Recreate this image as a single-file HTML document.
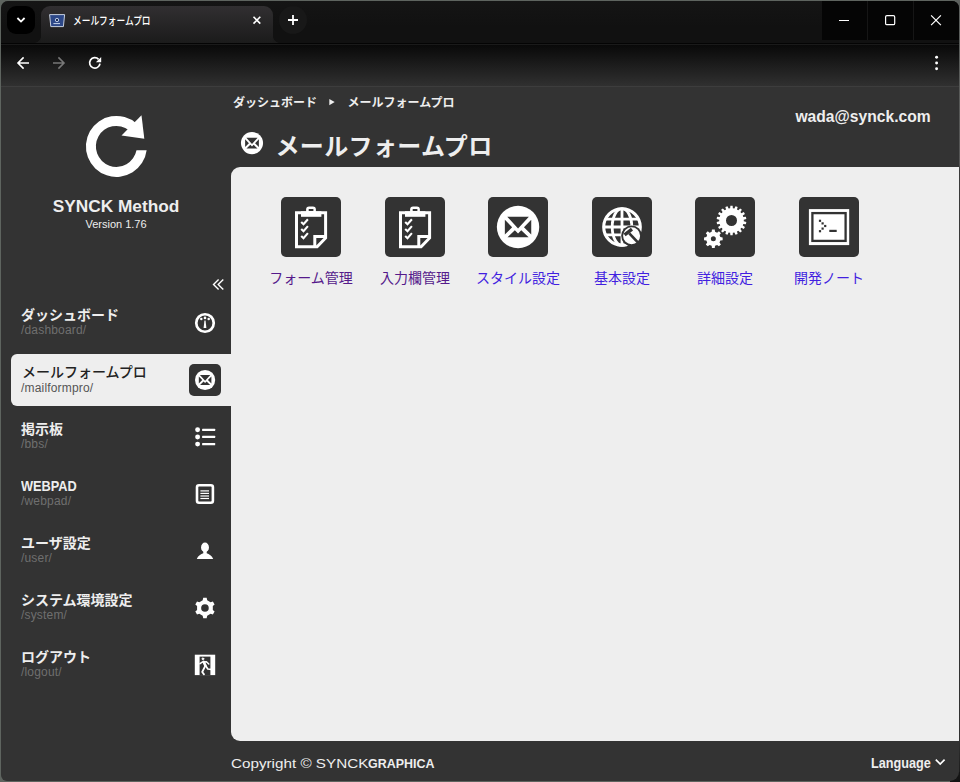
<!DOCTYPE html>
<html lang="ja">
<head>
<meta charset="utf-8">
<title>メールフォームプロ</title>
<style>
*{box-sizing:border-box;margin:0;padding:0}
html,body{width:960px;height:782px;overflow:hidden;background:#5e645f}
body{font-family:"Liberation Sans","Noto Sans CJK JP",sans-serif;color:#eee;position:relative}
#redge{position:absolute;right:0;top:0;width:4px;height:782px;background:linear-gradient(#5c605d 0,#555 165px,#3a3a3a 170px,#303030 740px,#161616 782px)}
#brc{position:absolute;right:0;bottom:0;width:10px;height:10px;background:#141414}
#win{position:absolute;left:1px;top:1px;width:957.5px;height:780px;border-radius:7px 7px 9px 6px;overflow:hidden;background:#333}
/* #o re-bases coordinates so children use screenshot pixel coordinates */
#o{position:absolute;left:-1px;top:-1px;width:960px;height:782px}
#o>*{position:absolute}
/* ---------- browser chrome ---------- */
#tabstrip{left:0;top:0;width:960px;height:44px;background:linear-gradient(#151515,#111 60%)}
#tabsearch{left:7px;top:6px;width:28px;height:28px;border-radius:9px;background:#000}
#tab{left:41px;top:6px;width:232px;height:37px;border-radius:9px 9px 0 0;background:linear-gradient(#312f31,#1b1b1b)}
#tabtitle{left:72.5px;top:13px;font-size:11.5px;line-height:16px;color:#fff;font-weight:500;white-space:nowrap;transform:scaleX(.757);transform-origin:0 50%}
#wctl{left:822px;top:0;width:138px;height:40px;background:#050505}
#wctl i{position:absolute;top:0;width:1px;height:40px;background:#161616}
#tbsep{left:0;top:43px;width:960px;height:2px;background:linear-gradient(#040404 50%,#1a1a1a 50%)}
#toolbar{left:0;top:45px;width:960px;height:41px;background:linear-gradient(#090909,#303030)}
#tbline{left:0;top:86px;width:960px;height:1px;background:#3d3d3d}
/* ---------- page ---------- */
#panel{left:231px;top:167px;width:740px;height:574px;background:#eee;border-radius:9px 0 0 9px}
.t{white-space:nowrap;line-height:1;color:#eee}
.b{font-weight:bold}
.mt{left:21px;font-size:14px;font-weight:bold;color:#eee;white-space:nowrap;line-height:16px;margin-top:.5px}
.ms{left:21px;letter-spacing:.18px;font-size:12px;color:#6f6f6f;white-space:nowrap;line-height:14px}
#sel{left:11px;top:354px;width:221px;height:52px;background:#eee;border-radius:6px 0 0 6px}
.ibox{top:197px;width:60px;height:60px;border-radius:5px;background:#333}
.ilab{top:269px;width:140px;text-align:center;font-size:14px;line-height:18px;white-space:nowrap}
.v{color:#551a8b}
.u{color:#421fe0}
svg{overflow:visible}
</style>
</head>
<body>
<div id="redge"></div><div id="brc"></div>
<div id="win"><div id="o">
  <!-- browser chrome -->
  <div id="tabstrip"></div>
  <div id="tabsearch"></div>
  <div id="tab"></div>
  <div style="left:34px;top:36px;width:7px;height:7px;background:radial-gradient(circle at 0 0,transparent 6.6px,#1b1b1b 7.2px)"></div>
  <div style="left:273px;top:36px;width:7px;height:7px;background:radial-gradient(circle at 100% 0,transparent 6.6px,#1b1b1b 7.2px)"></div>
  <div style="left:279px;top:6px;width:28px;height:28px;border-radius:14px;background:#181818"></div>
  <div id="tabtitle">メールフォームプロ</div>
  <div id="wctl"><i style="left:45px"></i><i style="left:91px"></i></div>
  <div id="tbsep"></div>
  <div id="toolbar"></div>
  <div id="tbline"></div>
  <!--CHROME-ICONS-->

  <!-- page -->
  <div id="panel"></div>
  <div id="sel"></div>
  <!--SIDEBAR-->
  <div class="t b" id="sm" style="left:16px;top:195.5px;width:200px;text-align:center;font-size:17.3px;line-height:20px">SYNCK Method</div>
  <div class="t" id="ver" style="left:16px;top:217px;width:200px;text-align:center;font-size:11px;line-height:14px">Version 1.76</div>
  <div class="mt" style="top:306px">ダッシュボード</div><div class="ms" style="top:323px">/dashboard/</div>
  <div class="mt" style="top:363.5px;color:#222;left:22px;font-weight:500">メールフォームプロ</div><div class="ms" style="top:381px;color:#555;left:21px">/mailformpro/</div>
  <div class="mt" style="top:420px">掲示板</div><div class="ms" style="top:437px">/bbs/</div>
  <div class="mt" style="top:477px;font-size:14.6px;transform:scaleX(.875);transform-origin:0 50%">WEBPAD</div><div class="ms" style="top:494px">/webpad/</div>
  <div class="mt" style="top:534px">ユーザ設定</div><div class="ms" style="top:551px">/user/</div>
  <div class="mt" style="top:591px">システム環境設定</div><div class="ms" style="top:608px">/system/</div>
  <div class="mt" style="top:648px">ログアウト</div><div class="ms" style="top:665px">/logout/</div>
  <!--HEADER-->
  <div class="t b" id="bc1" style="left:233px;top:94.5px;font-size:12px;line-height:16px">ダッシュボード</div>
  <div class="t b" id="bc2" style="left:347.5px;top:94.5px;font-size:12px;line-height:16px">メールフォームプロ</div>
  <div class="t b" id="ttl" style="left:275.5px;top:130.5px;font-size:24px;line-height:32px;letter-spacing:.35px">メールフォームプロ</div>
  <div class="t b" id="mail" style="right:29px;top:106px;font-size:16.5px;line-height:20px;transform:scaleX(.948);transform-origin:100% 50%">wada@synck.com</div>
  <!--ICONS-->
  <div class="ibox" id="ib0" style="left:281px"></div><div class="ilab v" style="left:241px">フォーム管理</div>
  <div class="ibox" id="ib1" style="left:385px"></div><div class="ilab v" style="left:345px">入力欄管理</div>
  <div class="ibox" id="ib2" style="left:488px"></div><div class="ilab u" style="left:448px">スタイル設定</div>
  <div class="ibox" id="ib3" style="left:592px"></div><div class="ilab u" style="left:552px">基本設定</div>
  <div class="ibox" id="ib4" style="left:695px"></div><div class="ilab u" style="left:655px">詳細設定</div>
  <div class="ibox" id="ib5" style="left:799px"></div><div class="ilab u" style="left:759px">開発ノート</div>
  <!--FOOTER-->
  <div class="t" id="c1" style="left:231px;top:754.6px;font-size:13.6px;line-height:18px;transform:scaleX(1.12);transform-origin:0 50%">Copyright © SYNCK</div>
  <div class="t b" id="c2" style="left:368.3px;top:754.6px;font-size:13.6px;line-height:18px;transform:scaleX(.917);transform-origin:0 50%">GRAPHICA</div>
  <div class="t b" id="lang" style="left:871px;top:753.5px;font-size:14.5px;line-height:18px;transform:scaleX(.875);transform-origin:0 50%">Language</div>
  <!--SIDE-START--><svg style="left:0;top:0" width="960" height="782" viewBox="0 0 960 782" ><g transform="translate(116.4,146.4)" fill="#fff"><path d="M20,-23A30.5,30.5 0 1 0 30.25,3.9L20.1,3.9A20.5,20.5 0 1 1 12.6,-16.15Z"/><path d="M25.1,-31.2L27.9,-7.6L5.1,-10.9Z"/></g><path fill="none" stroke="#fff" stroke-width="1.4" d="M218.6,279.5L213.5,284.5L218.6,289.6 M223.3,279.5L218.2,284.5L223.3,289.6"/><g transform="translate(205,323)"><circle r="8.75" fill="none" stroke="#fff" stroke-width="2.7"/><circle cx="-3.7" cy="-4" r="1.25" fill="#fff"/><circle cx="0" cy="-5.1" r="1.3" fill="#fff"/><circle cx="3.7" cy="-4" r="1.25" fill="#fff"/><path fill="#fff" d="M-0.55,-2.6H0.55L1.4,5H-1.4Z"/></g><rect x="189" y="364" width="32" height="32" rx="5" fill="#333"/><g transform="translate(205.1,380) scale(0.4764)"><circle r="21.2" fill="#fff"/><path fill="#333" d="M-10.8,-10.3H10.8L0,1.6Z M-13.2,-7.2V7.6L-5.9,0.2Z M13.2,-7.2V7.6L5.9,0.2Z M-10.6,10.3H10.6L3.2,3.3L0,6.5L-3.2,3.3Z"/></g><circle cx="197.6" cy="429.8" r="2.45" fill="#fff"/><rect x="202.1" y="428.65000000000003" width="13.1" height="2.3" rx=".5" fill="#fff"/><circle cx="197.6" cy="436.95" r="2.45" fill="#fff"/><rect x="202.1" y="435.8" width="13.1" height="2.3" rx=".5" fill="#fff"/><circle cx="197.6" cy="444.1" r="2.45" fill="#fff"/><rect x="202.1" y="442.95000000000005" width="13.1" height="2.3" rx=".5" fill="#fff"/><rect x="197" y="485.3" width="15.9" height="17.4" rx="2" fill="none" stroke="#fff" stroke-width="2.6"/><rect x="200.4" y="490.29999999999995" width="8.6" height="1.2" fill="#fff"/><rect x="200.4" y="492.79999999999995" width="8.6" height="1.2" fill="#fff"/><rect x="200.4" y="495.4" width="8.6" height="1.2" fill="#fff"/><rect x="200.4" y="497.9" width="8.6" height="1.2" fill="#fff"/><g fill="#fff"><ellipse cx="205" cy="547.4" rx="3.95" ry="4.9"/><path d="M203.3,551V553.2C201,554 198,555.5 196.8,558.9H213.2C212,555.5 209,554 206.7,553.2V551Z"/></g><path fill="#fff" fill-rule="evenodd" d="M202.69,600.22 L203.23,597.84 L206.67,597.84 L207.21,600.22 L210.56,602.15 L212.89,601.43 L214.60,604.41 L212.82,606.07 L212.82,609.93 L214.60,611.59 L212.89,614.57 L210.56,613.85 L207.21,615.78 L206.67,618.16 L203.23,618.16 L202.69,615.78 L199.34,613.85 L197.01,614.57 L195.30,611.59 L197.08,609.93 L197.08,606.07 L195.30,604.41 L197.01,601.43 L199.34,602.15Z M201.15,608.00 a3.8,3.8 0 1,0 7.6,0 a3.8,3.8 0 1,0 -7.6,0Z"/><rect x="194.8" y="654.7" width="20.4" height="20.4" fill="#fff"/><rect x="199.6" y="656.6" width="10.8" height="18.6" fill="#333"/><g fill="none" stroke="#fff" stroke-linecap="round" stroke-linejoin="round"><circle cx="202.9" cy="658.8" r="0.9" fill="#fff" stroke-width=".9"/><path d="M200,663.7L202.6,661.9L206.4,661.7L208.8,664" stroke-width="1.5"/><path d="M203.6,661.8L205.4,665.6" stroke-width="2.6"/><path d="M205.4,665.6L202.2,672L204,674.4" stroke-width="1.8"/><path d="M205.8,666L207.8,669L211.4,669.4" stroke-width="1.7"/></g><g transform="translate(252,143.1) scale(0.5212)"><circle r="21.2" fill="#fff"/><path fill="#333" d="M-10.8,-10.3H10.8L0,1.6Z M-13.2,-7.2V7.6L-5.9,0.2Z M13.2,-7.2V7.6L5.9,0.2Z M-10.6,10.3H10.6L3.2,3.3L0,6.5L-3.2,3.3Z"/></g></svg><!--SIDE-END-->
  <!--BIG-START--><svg style="left:0;top:0" width="960" height="782" viewBox="0 0 960 782" ><g transform="translate(281,197)"><g fill="none" stroke="#fff" stroke-width="3"><path d="M15.5,15.8V49.8H36.1L44.6,41V15.8Z"/><path d="M33.8,49.8V39.4H44.6" stroke-width="3"/></g><rect x="20" y="14.3" width="20.4" height="5.5" fill="#fff"/><path fill="#fff" fill-rule="evenodd" d="M25.1,15V12.4a3,3 0 0 1 3,-3h3.8a3,3 0 0 1 3,3V15Z M27.7,12.1h4.7v1.9h-4.7Z"/><g fill="none" stroke="#fff" stroke-width="2.1"><path d="M20.2,25.0L22.5,27.3L26.9,22.2"/><path d="M20.2,31.9L22.5,34.2L26.9,29.1"/><path d="M20.2,38.9L22.5,41.2L26.9,36.1"/></g></g><g transform="translate(385,197)"><g fill="none" stroke="#fff" stroke-width="3"><path d="M15.5,15.8V49.8H36.1L44.6,41V15.8Z"/><path d="M33.8,49.8V39.4H44.6" stroke-width="3"/></g><rect x="20" y="14.3" width="20.4" height="5.5" fill="#fff"/><path fill="#fff" fill-rule="evenodd" d="M25.1,15V12.4a3,3 0 0 1 3,-3h3.8a3,3 0 0 1 3,3V15Z M27.7,12.1h4.7v1.9h-4.7Z"/><g fill="none" stroke="#fff" stroke-width="2.1"><path d="M20.2,25.0L22.5,27.3L26.9,22.2"/><path d="M20.2,31.9L22.5,34.2L26.9,29.1"/><path d="M20.2,38.9L22.5,41.2L26.9,36.1"/></g></g><g transform="translate(518.05,227) scale(1.0000)"><circle r="21.2" fill="#fff"/><path fill="#333" d="M-10.8,-10.3H10.8L0,1.6Z M-13.2,-7.2V7.6L-5.9,0.2Z M13.2,-7.2V7.6L5.9,0.2Z M-10.6,10.3H10.6L3.2,3.3L0,6.5L-3.2,3.3Z"/></g><g transform="translate(592,197)"><g fill="none" stroke="#fff"><circle cx="30" cy="30" r="18.3" stroke-width="3.1"/><g stroke-width="2.8"><path d="M30,11.5V48.5"/><ellipse cx="30" cy="30" rx="9.8" ry="18.4"/><path d="M12,30H48"/><path d="M13.6,22.2H46.4"/><path d="M13.6,37.8H46.4"/></g></g><circle cx="39.6" cy="38.8" r="10.4" fill="#333"/><circle cx="39.6" cy="38.8" r="8.5" fill="#fff"/><g stroke="#333" fill="none"><path d="M32.6,37.9L40,32.2" stroke-width="3.4"/><path d="M37.3,36.3L45.6,45.2" stroke-width="2.7"/></g></g><g transform="translate(695,197)"><path fill="#fff" fill-rule="evenodd" d="M35.13,11.28 L35.36,8.64 L37.64,8.64 L37.87,11.28 L39.39,11.54 L40.51,9.15 L42.66,9.93 L41.97,12.48 L43.31,13.26 L45.17,11.38 L46.92,12.85 L45.41,15.02 L46.40,16.20 L48.79,15.08 L49.94,17.06 L47.77,18.58 L48.30,20.03 L50.93,19.79 L51.33,22.05 L48.78,22.73 L48.78,24.27 L51.33,24.95 L50.93,27.21 L48.30,26.97 L47.77,28.42 L49.94,29.94 L48.79,31.92 L46.40,30.80 L45.41,31.98 L46.92,34.15 L45.17,35.62 L43.31,33.74 L41.97,34.52 L42.66,37.07 L40.51,37.85 L39.39,35.46 L37.87,35.72 L37.64,38.36 L35.36,38.36 L35.13,35.72 L33.61,35.46 L32.49,37.85 L30.34,37.07 L31.03,34.52 L29.69,33.74 L27.83,35.62 L26.08,34.15 L27.59,31.98 L26.60,30.80 L24.21,31.92 L23.06,29.94 L25.23,28.42 L24.70,26.97 L22.07,27.21 L21.67,24.95 L24.22,24.27 L24.22,22.73 L21.67,22.05 L22.07,19.79 L24.70,20.03 L25.23,18.58 L23.06,17.06 L24.21,15.08 L26.60,16.20 L27.59,15.02 L26.08,12.85 L27.83,11.38 L29.69,13.26 L31.03,12.48 L30.34,9.93 L32.49,9.15 L33.61,11.54Z M31.00,23.50 a5.5,5.5 0 1,0 11.0,0 a5.5,5.5 0 1,0 -11.0,0Z"/><path fill="#fff" fill-rule="evenodd" d="M16.67,34.80 L16.95,32.50 L19.75,32.50 L20.03,34.80 L22.11,35.66 L23.93,34.24 L25.91,36.22 L24.49,38.04 L25.35,40.12 L27.65,40.40 L27.65,43.20 L25.35,43.48 L24.49,45.56 L25.91,47.38 L23.93,49.36 L22.11,47.94 L20.03,48.80 L19.75,51.10 L16.95,51.10 L16.67,48.80 L14.59,47.94 L12.77,49.36 L10.79,47.38 L12.21,45.56 L11.35,43.48 L9.05,43.20 L9.05,40.40 L11.35,40.12 L12.21,38.04 L10.79,36.22 L12.77,34.24 L14.59,35.66Z M15.85,41.80 a2.5,2.5 0 1,0 5.0,0 a2.5,2.5 0 1,0 -5.0,0Z"/></g><g transform="translate(799,197)"><rect x="9.9" y="12.1" width="40.3" height="36" fill="#fff"/><rect x="13.4" y="16.1" width="33.2" height="27.8" fill="none" stroke="#333" stroke-width="2.3"/><rect x="19.9" y="22.7" width="2.2" height="2.2" fill="#333"/><rect x="22.5" y="25.299999999999997" width="2.2" height="2.2" fill="#333"/><rect x="25.099999999999998" y="27.9" width="2.2" height="2.2" fill="#333"/><rect x="22.5" y="30.5" width="2.2" height="2.2" fill="#333"/><rect x="19.9" y="33.1" width="2.2" height="2.2" fill="#333"/><rect x="30.3" y="32.8" width="7.4" height="2.2" fill="#333"/></g></svg><!--BIG-END-->
  <!--CHROME-START--><svg style="left:0;top:0" width="960" height="782" viewBox="0 0 960 782" ><g fill="none" stroke="#fff" stroke-width="1.6"><path d="M17.4,18L21,21.6L24.6,18" stroke-width="1.8"/><path d="M253.5,16.8L260.3,23.6M260.3,16.8L253.5,23.6"/><path d="M293,15V25M288,20H298" stroke-width="1.8"/><path d="M839,20.5H849" stroke-width="1.2"/><rect x="885.6" y="15.6" width="9.1" height="9.1" rx="1.3" stroke-width="1.2"/><path d="M931.1,15.4L940.9,25.2M940.9,15.4L931.1,25.2" stroke-width="1.2"/><path d="M29,63H18.2M23.6,57.4L18,63L23.6,68.6"/><path d="M53,63H63.8M58.4,57.4L64,63L58.4,68.6" stroke="#777"/><path d="M100,63.6A5.2,5.2 0 1 1 98.6,59.3" stroke-width="1.7"/></g><path fill="#fff" d="M101.2,56.9V62.2H95.9Z"/><circle cx="936.6" cy="57.2" r="1.45" fill="#fff"/><circle cx="936.6" cy="63" r="1.45" fill="#fff"/><circle cx="936.6" cy="68.8" r="1.45" fill="#fff"/><path d="M49.6,14.6H64.6L63.4,26.6H50.8Z" fill="#2d4888" stroke="#c6cfdd" stroke-width="1"/><circle cx="57" cy="20" r="1.7" fill="#1c2c55" stroke="#b9c8e2" stroke-width="1"/><rect x="53.4" y="23" width="6.6" height="1.1" fill="#b8c6e0"/><path fill="#eee" d="M329.3,98.9L334.7,102.1L329.3,105.3Z"/><path fill="none" stroke="#fff" stroke-width="1.7" d="M935.8,759.6L940.2,764L944.6,759.6"/></svg><!--CHROME-END-->
</div></div>
</body>
</html>
